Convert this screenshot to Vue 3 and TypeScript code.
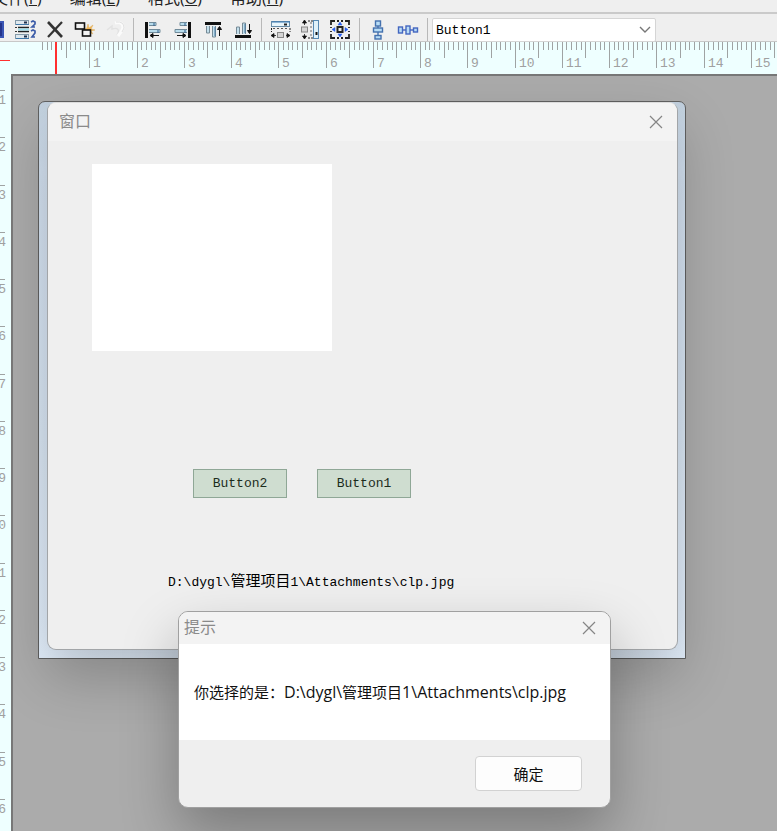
<script setup lang="ts">
import { computed, onBeforeUnmount, onMounted, ref } from 'vue'

interface Tick { pos: number; size: number }
interface Mark { pos: number; text: string }

const menus = [
  { label: '文件', key: 'F' },
  { label: '编辑', key: 'E' },
  { label: '格式', key: 'O' },
  { label: '帮助', key: 'H' },
]

const selected = ref('Button1')
const path = ['D:\\dygl\\', '管理项目', '1\\Attachments\\clp.jpg']

const UNIT = 47.25
const TOP_ORIGIN = 42
const SIDE_ORIGIN = 16

const width = ref(window.innerWidth)
const height = ref(window.innerHeight)
function measure() {
  width.value = window.innerWidth
  height.value = window.innerHeight
}
onMounted(() => window.addEventListener('resize', measure))
onBeforeUnmount(() => window.removeEventListener('resize', measure))

const topTicks = computed<Tick[]>(() =>
  Array.from({ length: Math.ceil(((width.value - TOP_ORIGIN) / UNIT) * 10) }, (_, i) => ({
    pos: TOP_ORIGIN + Math.round((i * UNIT) / 10),
    size: i > 0 && i % 10 === 0 ? 26 : i % 5 === 0 && i > 0 ? 16 : 8,
  })),
)
const topMarks = computed<Mark[]>(() =>
  Array.from({ length: Math.floor((width.value - TOP_ORIGIN) / UNIT) }, (_, i) => ({
    pos: TOP_ORIGIN + Math.round((i + 1) * UNIT),
    text: String(i + 1),
  })),
)
const sideMarks = computed<Mark[]>(() =>
  Array.from({ length: Math.floor((height.value - 74) / UNIT) }, (_, i) => ({
    pos: SIDE_ORIGIN + Math.round(i * UNIT),
    text: String(i + 1),
  })),
)
</script>

<template>
  <div class="designer">
    <nav class="menubar">
      <button v-for="m in menus" :key="m.key" type="button" class="menu">{{ m.label }}(<u>{{ m.key }}</u>)</button>
    </nav>

    <div class="toolbar">
      <button type="button" class="tool edge" aria-label="属性">
        <svg width="10" height="27"><rect x="0" y="7" width="4" height="17" fill="#3a55b4" /><rect x="0" y="9" width="2" height="13" fill="#24348c" /></svg>
      </button>
      <button type="button" class="tool" aria-label="顺序">
        <svg width="24" height="27" fill="none">
          <rect x="2.500" y="6.500" width="13" height="4" fill="#dfe8ee" stroke="#8399a8" />
          <path d="M3 10.500h13" stroke="#3f78a8" /><path d="M11 8.500h3" stroke="#20304c" stroke-width="2" />
          <path d="M2 13.500h2M2 17.500h2" stroke="#333" /><path d="M5 13.500h11M5 17.500h11" stroke="#222" stroke-width="1.600" />
          <path d="M5 15.500h11" stroke="#9fe0ee" stroke-width="2" />
          <rect x="2.500" y="20.500" width="13" height="4" fill="#dfe8ee" stroke="#8399a8" />
          <path d="M3 24.500h13" stroke="#3f78a8" /><path d="M11 22.500h3" stroke="#20304c" stroke-width="2" />
          <path d="M18 8l2-1 2 1v2l-3 3h3M18 17l2-1 2 1v2l-3 4h3" stroke="#3c5ca8" stroke-width="1.700" />
        </svg>
      </button>
      <button type="button" class="tool" aria-label="删除">
        <svg width="24" height="27" fill="none" stroke="#333"><path d="M5 8l14 15" stroke-width="2.600" /><path d="M19 8L5 23" stroke-width="2.200" /></svg>
      </button>
      <button type="button" class="tool" aria-label="新建控件">
        <svg width="24" height="27" fill="none">
          <path d="M15 10l1 4 4-3-2 4 4 1-4 1 2 3-4-2-2 3v-4l-4-1 4-2z" fill="#f3b34c" stroke="#dfb66c" stroke-width=".6" />
          <rect x="2.500" y="9" width="9" height="6" fill="#f2f2f2" stroke="#111" stroke-width="1.600" />
          <rect x="9.500" y="16" width="8" height="6" fill="#f2f2f2" stroke="#111" stroke-width="1.600" />
        </svg>
      </button>
      <button type="button" class="tool" aria-label="撤销" disabled>
        <svg width="24" height="27" fill="none"><path d="M4 16l5-4v3c6-2 8 1 5 6" stroke="#e2e2e2" stroke-width="1.400" /><path d="M12 9q8-2 8 5l-2 4-3 4" stroke="#fbfbfb" stroke-width="3" /><path d="M13 8q8-1 8 6l-2 4" stroke="#e0e0e0" /></svg>
      </button>
      <span class="sep"></span>
      <button type="button" class="tool" aria-label="左对齐">
        <svg width="24" height="27" fill="none">
          <path d="M5.500 8v16" stroke="#111" stroke-width="3" />
          <path d="M8 8.500h7v3H8M8 15.500h11v3H8" fill="#b8dcec" stroke="#718b9a" /><path d="M13 9v3M17 16v3" stroke="#315f8c" />
          <path d="M10 21.500h8M12 19.500l-3 2 3 2z" stroke="#111" fill="#111" />
        </svg>
      </button>
      <button type="button" class="tool" aria-label="右对齐">
        <svg width="24" height="27" fill="none">
          <path d="M18.500 8v16" stroke="#111" stroke-width="3" />
          <path d="M16 8.500H9v3h7M16 15.500H4v3h12" fill="#b8dcec" stroke="#718b9a" /><path d="M14 9v3M14 16v3" stroke="#315f8c" />
          <path d="M6 21.500h8M12 19.500l3 2-3 2z" stroke="#111" fill="#111" />
        </svg>
      </button>
      <button type="button" class="tool" aria-label="顶端对齐">
        <svg width="24" height="27" fill="none">
          <path d="M4 9.500h16" stroke="#111" stroke-width="3" />
          <path d="M5.500 12v7h3v-7M11.500 12v11h3V12" fill="#c3dfec" stroke="#768a96" /><path d="M14 13v9" stroke="#477ba4" />
          <path d="M18.500 14v8M16.500 15.500l2-3 2 3z" stroke="#111" fill="#111" />
        </svg>
      </button>
      <button type="button" class="tool" aria-label="底端对齐">
        <svg width="24" height="27" fill="none">
          <path d="M4 22.500h16" stroke="#111" stroke-width="3" />
          <path d="M5.500 20v-7h3v7M11.500 20V9h3v11" fill="#c3dfec" stroke="#768a96" /><path d="M14 10v9" stroke="#477ba4" />
          <path d="M18.500 10v8M16.500 16.500l2 3 2-3z" stroke="#111" fill="#111" />
        </svg>
      </button>
      <span class="sep"></span>
      <button type="button" class="tool" aria-label="等宽">
        <svg width="24" height="27" fill="none">
          <rect x="2.500" y="7.500" width="18" height="5" fill="#e7f5fb" stroke="#658ba8" /><path d="M3 8h18" stroke="#3979b4" /><path d="M15 10.500h3" stroke="#222" stroke-width="2" />
          <path d="M2.500 14v4M21 14v4" stroke="#222" stroke-dasharray="2 1" /><path d="M4 14.500h16" stroke="#555" stroke-dasharray="2 2" />
          <rect x="8.500" y="18.500" width="6" height="5" fill="#d5d5d5" stroke="#888" />
          <path d="M3 21.500h4M17 21.500h4M5 19.500l-3 2 3 2zM18 19.500l3 2-3 2z" stroke="#111" fill="#111" stroke-width=".8" />
        </svg>
      </button>
      <button type="button" class="tool" aria-label="等高">
        <svg width="24" height="27" fill="none">
          <rect x="14.500" y="6.500" width="5" height="18" fill="#dff1f9" stroke="#5688b2" /><path d="M17.500 18v3" stroke="#111" stroke-width="2" />
          <path d="M9 7h5M9 24h5" stroke="#222" stroke-dasharray="2 1" /><path d="M12 8v16" stroke="#666" stroke-dasharray="2 2" />
          <rect x="2.500" y="13" width="6" height="5" fill="#d5d5d5" stroke="#888" />
          <path d="M5.500 7v4M5.500 20v4M3.500 9l2-3 2 3zM3.500 22l2 3 2-3z" stroke="#111" fill="#111" stroke-width=".8" />
        </svg>
      </button>
      <button type="button" class="tool" aria-label="等大小">
        <svg width="24" height="27" fill="none">
          <path d="M6 7H2v4M2 20v4h4M16 7h4v4M16 24h4v-4M8 7h2M12 7h2M8 24h2M12 24h2M2 13v1M2 17v1M20 13v1M20 17v1" stroke="#222" stroke-width="1.800" />
          <rect x="8.500" y="13" width="5" height="5" fill="#eee" stroke="#222" stroke-width="2" />
          <path d="M11 8l-2 3h4zM11 23l-2-3h4zM3 15.500l3-2v4zM19 15.500l-3-2v4z" fill="#245cf0" stroke="#245cf0" stroke-width=".5" />
        </svg>
      </button>
      <span class="sep"></span>
      <button type="button" class="tool" aria-label="垂直间距">
        <svg width="24" height="27" fill="#b8dcf5" stroke="#4471ae" stroke-width="1.400">
          <path d="M11 11v12" /><rect x="8.500" y="7" width="5" height="5" /><rect x="6.500" y="14" width="9" height="4" /><rect x="8" y="21.500" width="6" height="3.500" />
        </svg>
      </button>
      <button type="button" class="tool" aria-label="水平间距">
        <svg width="24" height="27" fill="#b8dcf5" stroke="#4466c0" stroke-width="1.400">
          <path d="M4 16h14" /><rect x="1.500" y="13" width="4" height="6" /><rect x="9" y="12" width="4" height="8" /><rect x="16.500" y="14" width="4" height="4" />
        </svg>
      </button>
      <span class="sep"></span>
      <label class="combo">
        <select v-model="selected" aria-label="控件">
          <option>Button1</option>
          <option>Button2</option>
        </select>
        <svg width="12" height="8" fill="none" stroke="#777" stroke-width="1.400"><path d="M1 1l5 5 5-5" /></svg>
      </label>
    </div>

    <svg class="ruler-top" aria-hidden="true">
      <rect v-for="t in topTicks" :key="t.pos" class="tick" :x="t.pos" y="0" width="1" :height="t.size" />
      <text v-for="m in topMarks" :key="m.pos" :x="m.pos + 4" y="25">{{ m.text }}</text>
      <rect class="cursor" x="55" y="0" width="2" height="32" />
      <rect class="cursor" x="0" y="18" width="10" height="1" />
    </svg>

    <div class="workspace">
      <svg class="ruler-side" aria-hidden="true">
        <g v-for="m in sideMarks" :key="m.pos">
          <rect class="tick" x="0" :y="m.pos" width="5" height="1" />
          <text x="6" :y="m.pos + 14" text-anchor="end">{{ m.text }}</text>
        </g>
      </svg>

      <main class="canvas">
        <div class="frame"></div>

        <section class="form">
          <header class="form-title">
            <span>窗口</span>
            <button type="button" class="close" aria-label="关闭">
              <svg width="14" height="14" stroke="#858585" stroke-width="1.200"><path d="M1 1l12 12M13 1L1 13" /></svg>
            </button>
          </header>
          <div class="form-body">
            <div class="picture"></div>
            <div class="actions">
              <button type="button" class="green">Button2</button>
              <button type="button" class="green">Button1</button>
            </div>
            <p class="path">{{ path[0] }}<span>{{ path[1] }}</span>{{ path[2] }}</p>
          </div>
        </section>

        <section class="dialog" role="dialog" aria-labelledby="dialog-title">
          <header class="dialog-title">
            <span id="dialog-title">提示</span>
            <button type="button" class="close" aria-label="关闭">
              <svg width="14" height="14" stroke="#858585" stroke-width="1.200"><path d="M1 1l12 12M13 1L1 13" /></svg>
            </button>
          </header>
          <p class="message">你选择的是：<span>{{ path[0] }}</span>{{ path[1] }}<span>{{ path[2] }}</span></p>
          <footer class="dialog-foot">
            <button type="button" class="ok">确定</button>
          </footer>
        </section>
      </main>
    </div>
  </div>
</template>

<style>
body {
  margin: 0;
  overflow: hidden;
}
</style>

<style scoped>
.designer {
  display: flex;
  flex-direction: column;
  height: 100vh;
  overflow: hidden;
  background: #efefef;
  font-family: "Open Sans", "Noto Sans CJK SC", sans-serif;
}
button {
  margin: 0;
  padding: 0;
  border: 0;
  background: none;
  font-family: inherit;
  color: inherit;
}
.menubar {
  display: flex;
  align-items: flex-end;
  gap: 28px;
  height: 12px;
  flex: none;
  overflow: hidden;
  border-bottom: 2px solid #cacaca;
}
.menu {
  flex: none;
  height: 28px;
  font-size: 16px;
  line-height: 28px;
  color: #222;
  white-space: nowrap;
}
.menu:first-child {
  margin-left: -8px;
}
.toolbar {
  display: flex;
  flex: none;
  height: 27px;
  border-bottom: 1px solid #c8c8c8;
}
.tool {
  display: flex;
  flex: none;
  justify-content: center;
  width: 30px;
}
.edge {
  width: 10px;
}
.sep {
  flex: none;
  width: 1px;
  margin: 4px 4px 0 3px;
  background: #b8b8b8;
}
.combo {
  display: flex;
  align-items: center;
  width: 224px;
  height: 24px;
  margin-top: 4px;
  box-sizing: border-box;
  border: 1px solid #d5d5d5;
  border-radius: 2px;
  background: #fff;
}
.combo select {
  flex: 1;
  appearance: none;
  height: 22px;
  padding: 0 3px;
  border: 0;
  outline: 0;
  background: transparent;
  font-family: "Liberation Mono", monospace;
  font-size: 13px;
  color: #000;
}
.combo svg {
  margin-right: 4px;
}
.ruler-top {
  display: block;
  flex: none;
  width: 100%;
  height: 32px;
  background: #eeffff;
}
.ruler-top text,
.ruler-side text {
  font-family: "Liberation Mono", monospace;
  font-size: 13px;
  fill: #a0a0a0;
}
.tick {
  fill: #9fa3a3;
}
.cursor {
  fill: #ff3030;
}
.workspace {
  display: flex;
  flex: 1;
  min-height: 0;
}
.ruler-side {
  flex: none;
  width: 11px;
  height: 100%;
  background: #eeffff;
}
.canvas {
  position: relative;
  flex: 1;
  overflow: hidden;
  border-top: 2px solid #777;
  border-left: 2px solid #777;
  background: #ababab;
}
.frame {
  position: absolute;
  left: 25px;
  top: 25px;
  width: 648px;
  height: 558px;
  box-sizing: border-box;
  border: 1px solid #616161;
  border-radius: 7px 7px 0 0;
  background: linear-gradient(#c2d1df, #d4e2f1 12%, #dbe8f6 60%, #e6f2ff);
}
.form {
  position: absolute;
  left: 34px;
  top: 26px;
  width: 631px;
  height: 548px;
  box-sizing: border-box;
  display: flex;
  flex-direction: column;
  overflow: hidden;
  border: 1px solid #a2a5a8;
  border-top-color: #dcdcdc;
  border-radius: 9px;
  background: #efefef;
  box-shadow: 0 26px 56px rgba(0, 0, 0, 0.22);
}
.form-title,
.dialog-title {
  display: flex;
  flex: none;
  align-items: center;
  justify-content: space-between;
  background: #f3f3f3;
  color: #8a8a8a;
  font-size: 16px;
}
.form-title span,
.dialog-title span {
  padding-bottom: 4px;
}
.form-title {
  height: 38px;
  padding: 0 14px 0 11px;
}
.close {
  display: flex;
}
.form-body {
  display: flex;
  flex-direction: column;
  align-items: flex-start;
}
.picture {
  width: 240px;
  height: 187px;
  margin: 23px 0 0 44px;
  background: #fff;
}
.actions {
  display: flex;
  gap: 30px;
  margin: 118px 0 0 145px;
}
.green {
  width: 94px;
  height: 29px;
  border: 1px solid #8fa796;
  background: #cfddd0;
  font-family: "Liberation Mono", monospace;
  font-size: 13px;
  color: #1c2c1c;
}
.path {
  margin: 75px 0 0 120px;
  font-family: "Liberation Mono", "Noto Sans CJK SC", monospace;
  font-size: 13px;
  line-height: 20px;
  color: #000;
  white-space: nowrap;
}
.path span {
  font-size: 15px;
}
.dialog {
  position: absolute;
  left: 165px;
  top: 535px;
  width: 433px;
  box-sizing: border-box;
  overflow: hidden;
  border: 1px solid #a0a0a0;
  border-radius: 10px;
  background: #efefef;
  box-shadow: 0 26px 56px rgba(0, 0, 0, 0.28);
}
.dialog-title {
  height: 32px;
  padding: 0 14px 0 5px;
}
.message {
  height: 96px;
  margin: 0;
  padding-left: 15px;
  background: #fff;
  font-size: 15px;
  line-height: 96px;
  color: #111;
  white-space: nowrap;
}
.message span {
  font-size: 16px;
  line-height: 20px;
}
.dialog-foot {
  display: flex;
  justify-content: flex-end;
  padding: 16px 28px;
}
.ok {
  width: 107px;
  height: 35px;
  border: 1px solid #d2d2d2;
  border-radius: 4px;
  background: #fdfdfd;
  font-size: 15px;
  color: #111;
}
</style>
